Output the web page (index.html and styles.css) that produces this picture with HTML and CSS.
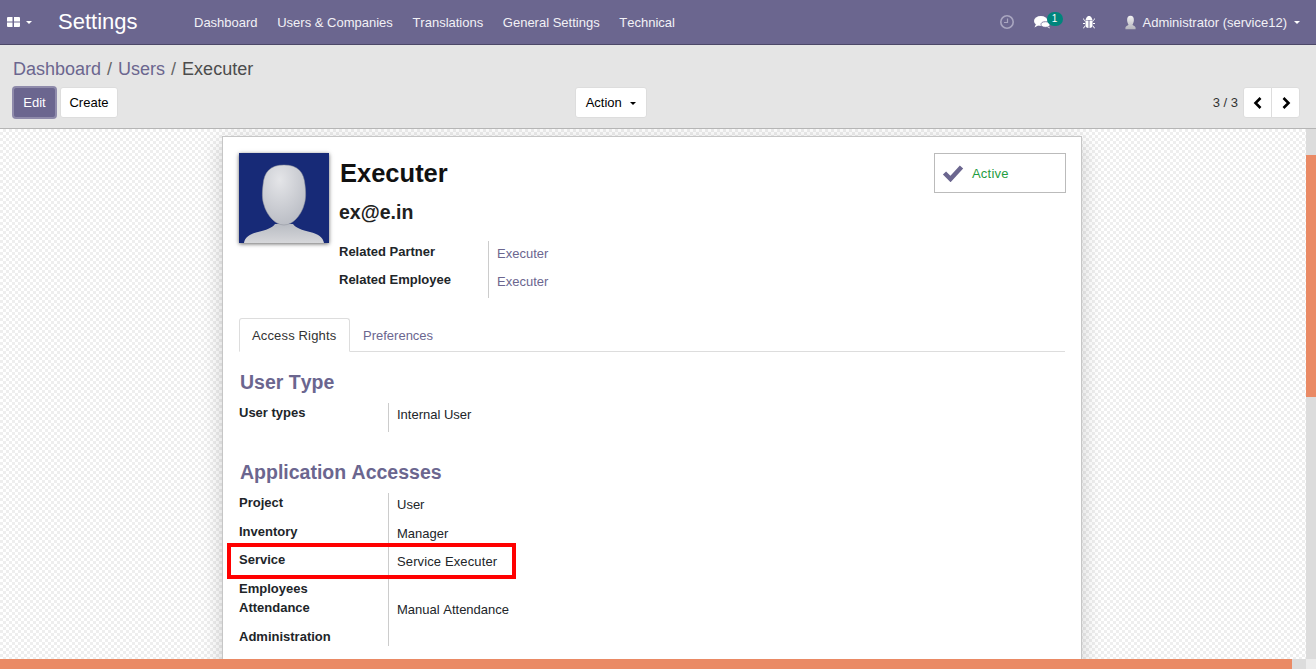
FILE: index.html
```html
<!DOCTYPE html>
<html lang="en">
<head>
<meta charset="utf-8">
<title>Settings</title>
<link rel="stylesheet" href="styles.css">
</head>
<body>
<nav class="navbar">
  <div class="apps">
    <svg class="apps-icon" width="13" height="10" viewBox="0 0 13 10"><path fill="#fff" d="M0 1q0-1 1-1h4.500v4.500H0zM7 0h5q1 0 1 1v3.500H7zM0 5.500h5.500V10H1q-1 0-1-1zM7 5.500h6V9q0 1-1 1H7z"/></svg>
    <span class="caret caret-light"></span>
  </div>
  <div class="brand">Settings</div>
  <ul class="menu">
    <li>Dashboard</li>
    <li>Users &amp; Companies</li>
    <li>Translations</li>
    <li>General Settings</li>
    <li>Technical</li>
  </ul>
  <div class="systray">
    <svg class="clock" width="14" height="14" viewBox="0 0 14 14"><circle cx="7" cy="7" r="6.200" fill="none" stroke="#a9a6c0" stroke-width="1.600"/><path d="M7.500 3.500V7.500H4" fill="none" stroke="#a9a6c0" stroke-width="1.200"/></svg>
    <div class="chat">
      <svg width="16" height="13" viewBox="0 0 16 13"><path d="M13 7l3 5.500-5-2.500z" fill="#fff"/><ellipse cx="6.800" cy="5" rx="6.800" ry="5" fill="#fff"/><path d="M2 8l-1.500 3.500 4.500-2.500z" fill="#fff"/><ellipse cx="11.500" cy="8.500" rx="4.500" ry="2.800" fill="#fff" stroke="#6b668f" stroke-width=".8"/></svg>
      <span class="badge">1</span>
    </div>
    <svg class="bug" width="12" height="13" viewBox="0 0 12 13"><path fill="#fff" d="M3.500 1.500L5 0h2l1.500 1.500 1 2.500h-7zM2.500 4.500h3v7.500q-3 0-3-3zM6.500 4.500h3V9q0 3-3 3zM0 2l2.500 3-.5.500L0 3zM12 2L9.500 5l.5.500L12 3zM0 7h2v1H0zM10 7h2v1h-2zM0 12l2-2.500.5.500L.8 12.600zM12 12l-2-2.500-.5.500 1.700 2.600z"/></svg>
    <div class="user">
      <svg width="11" height="15" viewBox="0 0 13 16"><defs><linearGradient id="av" x1="0" x2="0" y1="0" y2="1"><stop offset="0" stop-color="#f2f2f2"/><stop offset="1" stop-color="#b4b4bc"/></linearGradient></defs><path fill="url(#av)" d="M6.500 0C9.500 0 10.500 2 10.500 5 10.500 7.500 9.500 9.500 8.800 10.800c.2.800 3.200 1.400 3.700 3.200v2H.5v-2c.5-1.800 3.500-2.400 3.700-3.200C3.500 9.500 2.500 7.500 2.500 5 2.500 2 3.500 0 6.500 0z"/></svg>
      <span>Administrator (service12)</span>
      <span class="caret caret-light"></span>
    </div>
  </div>
</nav>

<header class="control-panel">
  <ol class="breadcrumb">
    <li class="crumb-link">Dashboard</li>
    <li class="crumb-sep">/</li>
    <li class="crumb-link">Users</li>
    <li class="crumb-sep">/</li>
    <li class="crumb-active">Executer</li>
  </ol>
  <div class="cp-row">
    <div class="cp-left">
      <button class="btn btn-primary">Edit</button>
      <button class="btn btn-create">Create</button>
    </div>
    <button class="btn btn-action">Action <span class="caret caret-dark"></span></button>
    <div class="pager">
      <span class="pager-value">3 / 3</span>
      <div class="pager-buttons">
        <button class="btn-pager"><svg width="10" height="12" viewBox="0 0 10 12"><path d="M7.500 1L2.500 6l5 5" fill="none" stroke="#000" stroke-width="2.600"/></svg></button>
        <button class="btn-pager"><svg width="10" height="12" viewBox="0 0 10 12"><path d="M2.500 1l5 5-5 5" fill="none" stroke="#000" stroke-width="2.600"/></svg></button>
      </div>
    </div>
  </div>
</header>

<div class="scroller">
  <main class="viewport">
    <div class="sheet">
      <div class="head">
        <svg class="avatar" width="90" height="90" viewBox="0 0 90 90">
          <defs>
            <radialGradient id="face" cx=".4" cy=".25" r=".85"><stop offset="0" stop-color="#e4e5e8"/><stop offset="1" stop-color="#b6b9c1"/></radialGradient>
            <linearGradient id="body" x1="0" x2="0" y1="0" y2="1"><stop offset="0" stop-color="#b9bcc3"/><stop offset="1" stop-color="#d6d7da"/></linearGradient>
          </defs>
          <rect width="90" height="90" fill="#172a77"/>
          <path fill="url(#body)" d="M5 90c1-6 6-9 14-11 8-2 14-4 17-8h18c3 4 9 6 17 8 8 2 13 5 14 11z"/>
          <path fill="url(#face)" stroke="#8c909a" stroke-width=".5" d="M45 12c14 0 20 7 21 20 1 7 1 15-1 20-2 8-10 20-20 20s-18-12-20-20c-2-5-2-13-1-20 1-13 7-20 21-20z"/>
        </svg>
        <div class="identity">
          <h1 class="name">Executer</h1>
          <h2 class="email">ex@e.in</h2>
          <div class="related">
            <div class="related-labels">
              <div class="related-label">Related Partner</div>
              <div class="related-label">Related Employee</div>
            </div>
            <div class="related-values">
              <div class="related-value">Executer</div>
              <div class="related-value">Executer</div>
            </div>
          </div>
        </div>
        <div class="active-box">
          <svg width="22" height="18" viewBox="0 0 22 18"><path d="M2.500 9l6 6L19.500 3" fill="none" stroke="#6b668f" stroke-width="4.500"/></svg>
          <span class="active-text">Active</span>
        </div>
      </div>

      <div class="tabs">
        <div class="tab tab-active">Access Rights</div>
        <div class="tab">Preferences</div>
      </div>

      <h3 class="section-title">User Type</h3>
      <div class="fields fields-user">
        <div class="f-label r29">User types</div>
        <div class="f-value r29">Internal User</div>
      </div>

      <h3 class="section-title section-apps">Application Accesses</h3>
      <div class="fields">
        <div class="f-label r29">Project</div><div class="f-value r29">User</div>
        <div class="f-label r28">Inventory</div><div class="f-value r28">Manager</div>
        <div class="f-label r29">Service</div><div class="f-value r29 wide-text">Service Executer</div>
        <div class="f-label r19">Employees</div><div class="f-value r19"></div>
        <div class="f-label r29">Attendance</div><div class="f-value r29">Manual Attendance</div>
        <div class="f-label r19">Administration</div><div class="f-value r19"></div>
        <div class="highlight"></div>
      </div>
    </div>
  </main>
  <div class="vbar"><div class="vthumb"></div></div>
</div>
<div class="hbar"><div class="hthumb"></div><div class="corner"></div></div>
</body>
</html>
```

FILE: styles.css
```css
* { box-sizing: border-box; }
html, body { margin: 0; height: 100%; overflow: hidden; }
body {
  display: flex;
  flex-direction: column;
  height: 669px;
  font-family: "Liberation Sans", Arial, sans-serif;
  font-size: 13px;
  color: #212529;
  font-kerning: none;
}
ul, ol { list-style: none; margin: 0; padding: 0; }
h1, h2, h3 { margin: 0; }
button { font-family: inherit; font-kerning: none; }

.navbar {
  flex: 0 0 45px;
  display: flex;
  align-items: center;
  background: #6b668f;
  border-bottom: 1px solid #4c4868;
  color: #fff;
}
.apps { display: flex; align-items: center; gap: 6px; padding-left: 7px; width: 58px; }
.apps-icon { display: block; }
.caret { display: inline-block; border-left: 3px solid transparent; border-right: 3px solid transparent; border-top: 3px solid #fff; }
.caret-dark { border-top-color: #000; margin-left: 5px; vertical-align: 2px; }
.brand { font-size: 22px; width: 136px; color: #fff; }
.menu { display: flex; gap: 19.600px; color: #f2f1f6; }
.systray { margin-left: auto; display: flex; align-items: center; padding-right: 16px; }
.clock { margin-right: 20px; }
.chat { position: relative; display: flex; margin-right: 33px; }
.badge {
  position: absolute;
  left: 13px;
  top: -4px;
  width: 16px;
  height: 14px;
  border-radius: 7px;
  background: #00857c;
  color: #fff;
  font-size: 10px;
  line-height: 14px;
  text-align: center;
}
.bug { margin-right: 30px; }
.user { display: flex; align-items: center; gap: 7px; color: #f2f1f6; }
.user .caret { margin-left: 0; }

.control-panel {
  flex: 0 0 84px;
  background: #e5e5e5;
  border-bottom: 1px solid #b5b5b5;
  padding: 0 16px 0 13px;
}
.breadcrumb { display: flex; gap: 6px; font-size: 18px; line-height: 20px; padding-top: 14px; height: 42px; }
.crumb-link { color: #6b668f; }
.crumb-sep { color: #666; }
.crumb-active { color: #4c4c4c; }
.cp-row { display: flex; align-items: flex-start; justify-content: space-between; }
.cp-left { display: flex; gap: 4px; width: 562px; }
.btn {
  height: 31px;
  padding: 0 9px;
  border: 1px solid #ddd;
  border-radius: 3px;
  background: #fff;
  color: #000;
  font-size: 13px;
}
.btn-primary {
  width: 43px;
  padding: 0;
  background: #6b668f;
  border: 1px solid #8f8bab;
  color: #fff;
  box-shadow: 0 0 0 1px #8f8bab;
}
.btn-create { width: 58px; padding: 0; }
.btn-action { width: 72px; }
.pager { margin-left: auto; display: flex; align-items: center; gap: 5px; }
.pager-value { color: #333; }
.pager-buttons { display: flex; }
.btn-pager {
  width: 29px;
  height: 31px;
  padding: 0;
  border: 1px solid #ddd;
  background: #fff;
  display: flex;
  align-items: center;
  justify-content: center;
}
.btn-pager:first-child { border-radius: 3px 0 0 3px; }
.btn-pager:last-child { border-radius: 0 3px 3px 0; margin-left: -1px; }

.scroller { flex: 1; min-height: 0; display: flex; }
.viewport {
  flex: 1;
  min-width: 0;
  overflow: hidden;
  padding-top: 7px;
  display: flex;
  justify-content: center;
  align-items: flex-start;
  background-color: #fff;
  background-image: repeating-conic-gradient(#eeeeee 0 25%, #fff 0 50%);
  background-size: 6px 6px;
}
.sheet {
  flex: 0 0 860px;
  margin-left: -2px;
  height: 700px;
  background: #fff;
  border: 1px solid #c6c6c6;
  box-shadow: 0 5px 20px -1px rgba(0,0,0,.2);
  padding: 16px 16px 0;
  position: relative;
}
.head { display: flex; align-items: flex-start; }
.avatar { display: block; flex: none; box-shadow: 0 1px 4px rgba(0,0,0,.6); margin-right: 10px; }
.identity { flex: 1; }
.name { font-size: 25.500px; line-height: 31px; color: #111; padding: 5px 0 0 1px; }
.email { font-size: 19.500px; line-height: 22px; color: #212121; margin-top: 12px; }
.related { display: flex; margin-top: 18px; height: 57px; }
.related-labels { width: 149px; font-weight: bold; color: #212529; }
.related-label { height: 28px; padding-top: 3px; }
.related-values { border-left: 1px solid #ccc; padding-left: 8px; color: #6b668f; }
.related-value { height: 28px; padding-top: 5px; }
.active-box {
  width: 132px;
  height: 40px;
  margin-right: -1px;
  border: 1px solid #bbb;
  display: flex;
  align-items: center;
  gap: 8px;
  padding-left: 7px;
  color: #1f9d3f;
}
.active-text { letter-spacing: .2px; }
.tabs { display: flex; margin-top: 20px; height: 34px; border-bottom: 1px solid #ddd; }
.tab { padding: 0 13px; line-height: 35px; color: #6b668f; }
.tab-active {
  height: 34px;
  background: #fff;
  border: 1px solid #ddd;
  border-bottom-color: #fff;
  border-radius: 3px 3px 0 0;
  color: #333;
  line-height: 33px;
  padding: 0 12px;
  width: 111px;
  letter-spacing: .15px;
}
.section-title { font-size: 19.500px; line-height: 24px; color: #6b668f; font-weight: bold; margin: 18px 0 0 1px; }
.section-apps { margin-top: 28px; }
.fields { display: grid; grid-template-columns: 149px 1fr; position: relative; margin-top: 9px; }
.f-label { font-weight: bold; color: #212529; padding-top: 2px; }
.f-value { border-left: 1px solid #ccc; padding: 4px 0 0 8px; color: #212529; }
.wide-text { letter-spacing: .12px; }
.r29 { height: 29px; }
.r28 { height: 28px; }
.r19 { height: 19px; }
.highlight {
  position: absolute;
  left: -12px;
  top: 50px;
  width: 289px;
  height: 36px;
  border: 4px solid #f00;
}

.vbar { flex: 0 0 10px; background: #dcdcdc; }
.vthumb { margin-top: 26px; height: 242px; background: #ea8a65; }
.hbar { flex: 0 0 10px; display: flex; background: #dcdcdc; }
.hthumb { width: 1292px; background: #ea8a65; }
.corner { margin-left: auto; width: 10px; background: #ececec; }
```
